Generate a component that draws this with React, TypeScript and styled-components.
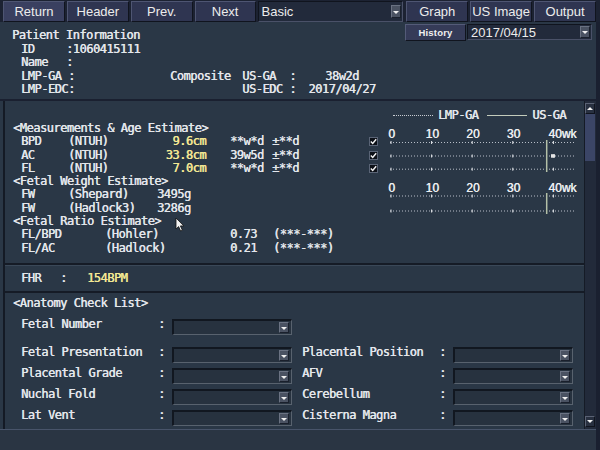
import React from "react";
import styled, { createGlobalStyle } from "styled-components";

const MONO = `"DejaVu Sans Mono", "Liberation Mono", monospace`;
const SANS = `"Liberation Sans", Arial, sans-serif`;
const PANEL = "#2a3746";
const TEXT = "#e4e7ec";
const YELLOW = "#f4e894";

const GlobalStyle = createGlobalStyle`
  html, body { margin: 0; padding: 0; background: #1a2030; }
  * { box-sizing: border-box; }
`;

const Screen = styled.div`
  position: relative;
  width: 600px;
  height: 450px;
  overflow: hidden;
  display: flex;
  flex-direction: column;
  background: #1a2030;
  color: ${TEXT};
  font-family: ${MONO};
  font-size: 12px;
  letter-spacing: -0.5px;
  text-shadow: 0.4px 0 0 currentColor;
`;

/* ---------- toolbar ---------- */

const Toolbar = styled.div`
  height: 22px;
  display: flex;
  gap: 2px;
  padding: 1px 4px 0 3px;
  background: #1c2232;
`;

const ToolButton = styled.div<{ $w?: number; $lit?: boolean }>`
  width: ${(p) => p.$w ?? 62}px;
  height: 21px;
  display: flex;
  align-items: center;
  justify-content: center;
  background: ${(p) => (p.$lit ? "#3a4060" : "#2f3551")};
  border: 1px solid;
  border-color: #4e5572 #10141e #10141e #4e5572;
  font-family: ${SANS};
  font-size: 13px;
  letter-spacing: 0;
  text-shadow: none;
  color: #ececec;
`;

const Select = styled.div<{ $w: number; $h?: number }>`
  width: ${(p) => p.$w}px;
  height: ${(p) => p.$h ?? 21}px;
  display: flex;
  align-items: center;
  justify-content: space-between;
  padding: 0 1px 0 3px;
  background: #222a3b;
  border: 1px solid;
  border-color: #10141e #4a5168 #4a5168 #10141e;
  font-family: ${SANS};
  font-size: 13px;
  letter-spacing: 0;
  text-shadow: none;
  color: #ececec;
`;

const ArrowBox = styled.span<{ $h?: number }>`
  width: 10px;
  height: ${(p) => p.$h ?? 13}px;
  display: flex;
  align-items: center;
  justify-content: center;
  background: #4a5262;
  border: 1px solid;
  border-color: #6a7282 #1a202c #1a202c #6a7282;
  &::after {
    content: "";
    border-left: 3px solid transparent;
    border-right: 3px solid transparent;
    border-top: 3px solid #f0f0f0;
    margin-top: 1px;
  }
`;

/* ---------- header panel ---------- */

const HeaderPanel = styled.div`
  height: 77px;
  margin-right: 4px;
  display: grid;
  grid-template-columns: 1fr auto;
  background: ${PANEL};
`;

const Info = styled.div`
  padding: 7px 0 0 12px;
`;

const InfoTitle = styled.div`
  height: 13.5px;
  line-height: 13.5px;
  white-space: pre;
`;

const InfoRow = styled.div<{ $cols: string }>`
  height: 13.5px;
  line-height: 13.5px;
  padding-left: 9px;
  display: grid;
  grid-template-columns: ${(p) => p.$cols};
  white-space: pre;
`;

const Cell = styled.span<{ $align?: "left" | "right" | "center"; $pad?: number; $tone?: "value" }>`
  text-align: ${(p) => p.$align ?? "left"};
  padding-left: ${(p) => p.$pad ?? 0}px;
  color: ${(p) => (p.$tone === "value" ? YELLOW : "inherit")};
  white-space: pre;
`;

const Controls = styled.div`
  display: flex;
  gap: 1px;
  align-items: flex-start;
  padding: 2px 4px 0 0;
`;

const HistoryButton = styled.div`
  width: 61px;
  height: 17px;
  display: flex;
  align-items: center;
  justify-content: center;
  background: #353b58;
  border: 1px solid;
  border-color: #545b78 #10141e #10141e #545b78;
  font-family: ${SANS};
  font-size: 9.5px;
  font-weight: bold;
  letter-spacing: 0.2px;
  text-shadow: none;
  color: #f0f0f0;
`;

/* ---------- scroll area ---------- */

const ScrollArea = styled.div`
  height: 328px;
  margin: 2px 4px 0 0;
  display: flex;
  background: ${PANEL};
  padding-left: 3px;
`;

const Content = styled.div`
  flex: 1;
  border-left: 2px solid #141a25;
  overflow: hidden;
  display: flex;
  flex-direction: column;
`;

const MeasureSection = styled.div`
  display: flex;
`;

const TextBlock = styled.div`
  width: 360px;
  padding: 21px 0 8px 8px;
`;

const SectionTitle = styled.div`
  height: 13.3px;
  line-height: 13.3px;
  white-space: pre;
`;

const DataRow = styled.div<{ $cols: string }>`
  height: 13.3px;
  line-height: 13.3px;
  padding-left: 8px;
  display: grid;
  grid-template-columns: ${(p) => p.$cols};
`;

const GraphBlock = styled.div`
  flex: 1;
  padding-top: 7px;
  display: flex;
  flex-direction: column;
`;

const Legend = styled.div`
  height: 14px;
  margin-left: 28px;
  display: flex;
  align-items: center;
  white-space: pre;
`;

const LegendLine = styled.span<{ $dashed?: boolean }>`
  width: 40px;
  height: 0;
  margin: 0 5px 0 0;
  border-top: 1px ${(p) => (p.$dashed ? "dotted" : "solid")} ${(p) => (p.$dashed ? "#c8ccd2" : "#c4ccbc")};
`;

const LegendLabel = styled.span`
  margin-right: 9px;
`;

const ChartRow = styled.div`
  margin-top: 2px;
  display: flex;
`;

const CheckColumn = styled.div`
  width: 20px;
  padding: 13px 0 0 4px;
  display: flex;
  flex-direction: column;
  gap: 4.5px;
`;

const CheckBox = styled.span`
  width: 9px;
  height: 9px;
  flex: none;
  display: flex;
  align-items: center;
  justify-content: center;
  background: #0c1017;
  border: 1px solid #5a6476;
`;

const ChartSvg = styled.svg`
  display: block;
  font-family: ${SANS};
  font-size: 12px;
  letter-spacing: 0;
`;

const FhrBox = styled.div`
  height: 30px;
  border-top: 2px solid #151b26;
  border-bottom: 2px solid #151b26;
  box-shadow: inset 0 1px 0 #3a4858;
  padding-left: 16px;
  display: grid;
  grid-template-columns: 39px 27px auto;
  align-items: center;
`;

const Anatomy = styled.div`
  padding: 4px 0 0 8px;
  display: flex;
  flex-direction: column;
`;

const AnatomyList = styled.div`
  margin-top: 9px;
  padding-left: 8px;
  display: flex;
  flex-direction: column;
  gap: 5px;
`;

const AnatomyRow = styled.div<{ $first?: boolean }>`
  height: 16px;
  display: grid;
  grid-template-columns: 137px 14px 120px 10px 137px 14px 120px;
  align-items: start;
  line-height: 10px;
  margin-bottom: ${(p) => (p.$first ? 7 : 0)}px;
  white-space: pre;
`;

const Field = styled.div`
  height: 16px;
  display: flex;
  justify-content: flex-end;
  align-items: center;
  padding-right: 2px;
  background: #27323f;
  border-style: solid;
  border-width: 2px 1px 1px 2px;
  border-color: #111720 #58626e #58626e #111720;
`;

const Scrollbar = styled.div`
  width: 12px;
  display: flex;
  flex-direction: column;
  background: #222a3a;
  border-left: 1px solid #151b26;
`;

const ScrollButton = styled.div<{ $down?: boolean }>`
  height: 11px;
  margin: ${(p) => (p.$down ? "auto 1px 2px 0" : "2px 1px 0 0")};
  display: flex;
  align-items: center;
  justify-content: center;
  background: #283040;
  border: 1px solid;
  border-color: #5a6274 #10141e #10141e #5a6274;
  &::after {
    content: "";
    border-left: 3px solid transparent;
    border-right: 3px solid transparent;
    ${(p) => (p.$down ? "border-top: 3px solid #f0f0f0;" : "border-bottom: 3px solid #f0f0f0;")}
  }
`;

const Thumb = styled.div`
  height: 47px;
  margin-right: 1px;
  background: #3b4566;
`;

const Footer = styled.div`
  height: 21px;
  margin-right: 4px;
  background: #2a3543;
  border-top: 1px solid #48546a;
`;

const Cursor = styled.svg`
  position: absolute;
  left: 175px;
  top: 217px;
`;

/* ---------- data ---------- */

const measurements = [
  { name: "BPD", method: "(NTUH)", value: "9.6cm", age: "**w*d", range: "±**d" },
  { name: "AC", method: "(NTUH)", value: "33.8cm", age: "39w5d", range: "±**d" },
  { name: "FL", method: "(NTUH)", value: "7.0cm", age: "**w*d", range: "±**d" },
];

const weights = [
  { name: "FW", method: "(Shepard)", value: "3495g" },
  { name: "FW", method: "(Hadlock3)", value: "3286g" },
];

const ratios = [
  { name: "FL/BPD", method: "(Hohler)", value: "0.73", range: "(***-***)" },
  { name: "FL/AC", method: "(Hadlock)", value: "0.21", range: "(***-***)" },
];

const anatomy: [string, string][] = [
  ["Fetal Presentation", "Placental Position"],
  ["Placental Grade", "AFV"],
  ["Nuchal Fold", "Cerebellum"],
  ["Lat Vent", "Cisterna Magna"],
];

const wx = (w: number) => 6 + w * 4.06;

function Axis({ top, lines, bar }: { top: number; lines: number[]; bar: [number, number] }) {
  return (
    <g>
      {[0, 10, 20, 30].map((w) => (
        <text key={w} x={wx(w) + 0.7} y={top} textAnchor="middle" fill="#eef0f2">
          {w}
        </text>
      ))}
      <text x={wx(40) - 5} y={top} fill="#eef0f2">
        40wk
      </text>
      {lines.map((y) => (
        <g key={y}>
          <line x1={5} x2={190} y1={y} y2={y} stroke="#b8bec8" strokeWidth={1} strokeDasharray="1 2" />
          {[0, 10, 20, 30, 40].map((w) => (
            <line key={w} x1={wx(w)} x2={wx(w)} y1={y - 1.5} y2={y + 1.5} stroke="#e8eaee" strokeWidth={1} />
          ))}
        </g>
      ))}
      <line x1={161.7} x2={161.7} y1={bar[0]} y2={bar[1]} stroke="#b4c0a8" strokeWidth={1.5} />
    </g>
  );
}

function Check() {
  return (
    <CheckBox>
      <svg width="7" height="7" viewBox="0 0 7 7">
        <path d="M0.8 3.6 L2.7 5.5 L6.2 1.2" stroke="#f4f4f4" strokeWidth={1.4} fill="none" />
      </svg>
    </CheckBox>
  );
}

export default function App() {
  return (
    <>
      <GlobalStyle />
      <Screen>
        <Toolbar>
          <ToolButton $lit>Return</ToolButton>
          <ToolButton>Header</ToolButton>
          <ToolButton>Prev.</ToolButton>
          <ToolButton $w={61}>Next</ToolButton>
          <Select $w={146}>
            Basic
            <ArrowBox />
          </Select>
          <ToolButton style={{ marginLeft: 1 }}>Graph</ToolButton>
          <ToolButton>US Image</ToolButton>
          <ToolButton>Output</ToolButton>
        </Toolbar>

        <HeaderPanel>
          <Info>
            <InfoTitle>Patient Information</InfoTitle>
            <InfoRow $cols="45px auto">
              <Cell>ID</Cell>
              <Cell>:1060415111</Cell>
            </InfoRow>
            <InfoRow $cols="45px auto">
              <Cell>Name</Cell>
              <Cell>:</Cell>
            </InfoRow>
            <InfoRow $cols="149px 66px 60px 4px 84px">
              <Cell>LMP-GA :</Cell>
              <Cell>Composite</Cell>
              <Cell $align="right">US-GA  :</Cell>
              <span />
              <Cell $align="center">38w2d</Cell>
            </InfoRow>
            <InfoRow $cols="149px 66px 60px 4px 84px">
              <Cell>LMP-EDC:</Cell>
              <span />
              <Cell $align="right">US-EDC :</Cell>
              <span />
              <Cell $align="center">2017/04/27</Cell>
            </InfoRow>
          </Info>
          <Controls>
            <HistoryButton>History</HistoryButton>
            <Select $w={125} $h={16}>
              2017/04/15
              <ArrowBox $h={12} />
            </Select>
          </Controls>
        </HeaderPanel>

        <ScrollArea>
          <Content>
            <MeasureSection>
              <TextBlock>
                <SectionTitle>{"<Measurements & Age Estimate>"}</SectionTitle>
                {measurements.map((m) => (
                  <DataRow key={m.name} $cols="47px 90px 48px 66px auto">
                    <Cell>{m.name}</Cell>
                    <Cell>{m.method}</Cell>
                    <Cell $align="right" $tone="value">
                      {m.value}
                    </Cell>
                    <Cell $pad={24}>{m.age}</Cell>
                    <Cell>{m.range}</Cell>
                  </DataRow>
                ))}
                <SectionTitle>{"<Fetal Weight Estimate>"}</SectionTitle>
                {weights.map((w) => (
                  <DataRow key={w.method} $cols="47px 89px auto">
                    <Cell>{w.name}</Cell>
                    <Cell>{w.method}</Cell>
                    <Cell>{w.value}</Cell>
                  </DataRow>
                ))}
                <SectionTitle>{"<Fetal Ratio Estimate>"}</SectionTitle>
                {ratios.map((r) => (
                  <DataRow key={r.name} $cols="84px 125px 43px auto">
                    <Cell>{r.name}</Cell>
                    <Cell>{r.method}</Cell>
                    <Cell>{r.value}</Cell>
                    <Cell>{r.range}</Cell>
                  </DataRow>
                ))}
              </TextBlock>

              <GraphBlock>
                <Legend>
                  <LegendLine $dashed />
                  <LegendLabel>LMP-GA</LegendLabel>
                  <LegendLine />
                  <span>US-GA</span>
                </Legend>
                <ChartRow>
                  <CheckColumn>
                    <Check />
                    <Check />
                    <Check />
                  </CheckColumn>
                  <ChartSvg width={195} height={92} viewBox="0 0 195 92">
                    <Axis top={14} lines={[18.5, 32, 45.2]} bar={[16, 48]} />
                    <rect x={166} y={30.2} width={4} height={3.5} fill="#e4e4e4" />
                    <Axis top={68} lines={[72, 87]} bar={[69, 90]} />
                  </ChartSvg>
                </ChartRow>
              </GraphBlock>
            </MeasureSection>

            <FhrBox>
              <Cell>FHR</Cell>
              <Cell>:</Cell>
              <Cell $tone="value">154BPM</Cell>
            </FhrBox>

            <Anatomy>
              <SectionTitle>{"<Anatomy Check List>"}</SectionTitle>
              <AnatomyList>
                <AnatomyRow $first>
                  <Cell>Fetal Number</Cell>
                  <Cell>:</Cell>
                  <Field>
                    <ArrowBox $h={11} />
                  </Field>
                </AnatomyRow>
                {anatomy.map(([left, right]) => (
                  <AnatomyRow key={left}>
                    <Cell>{left}</Cell>
                    <Cell>:</Cell>
                    <Field>
                      <ArrowBox $h={11} />
                    </Field>
                    <span />
                    <Cell>{right}</Cell>
                    <Cell>:</Cell>
                    <Field>
                      <ArrowBox $h={11} />
                    </Field>
                  </AnatomyRow>
                ))}
              </AnatomyList>
            </Anatomy>
          </Content>
          <Scrollbar>
            <ScrollButton />
            <Thumb />
            <ScrollButton $down />
          </Scrollbar>
        </ScrollArea>

        <Footer />

        <Cursor width="10" height="15" viewBox="0 0 10 15">
          <path d="M1 1 L1 12 L3.6 9.6 L5.6 14 L7.4 13.2 L5.4 8.9 L8.8 8.9 Z" fill="#f4f4f4" stroke="#111" strokeWidth={0.8} />
        </Cursor>
      </Screen>
    </>
  );
}
